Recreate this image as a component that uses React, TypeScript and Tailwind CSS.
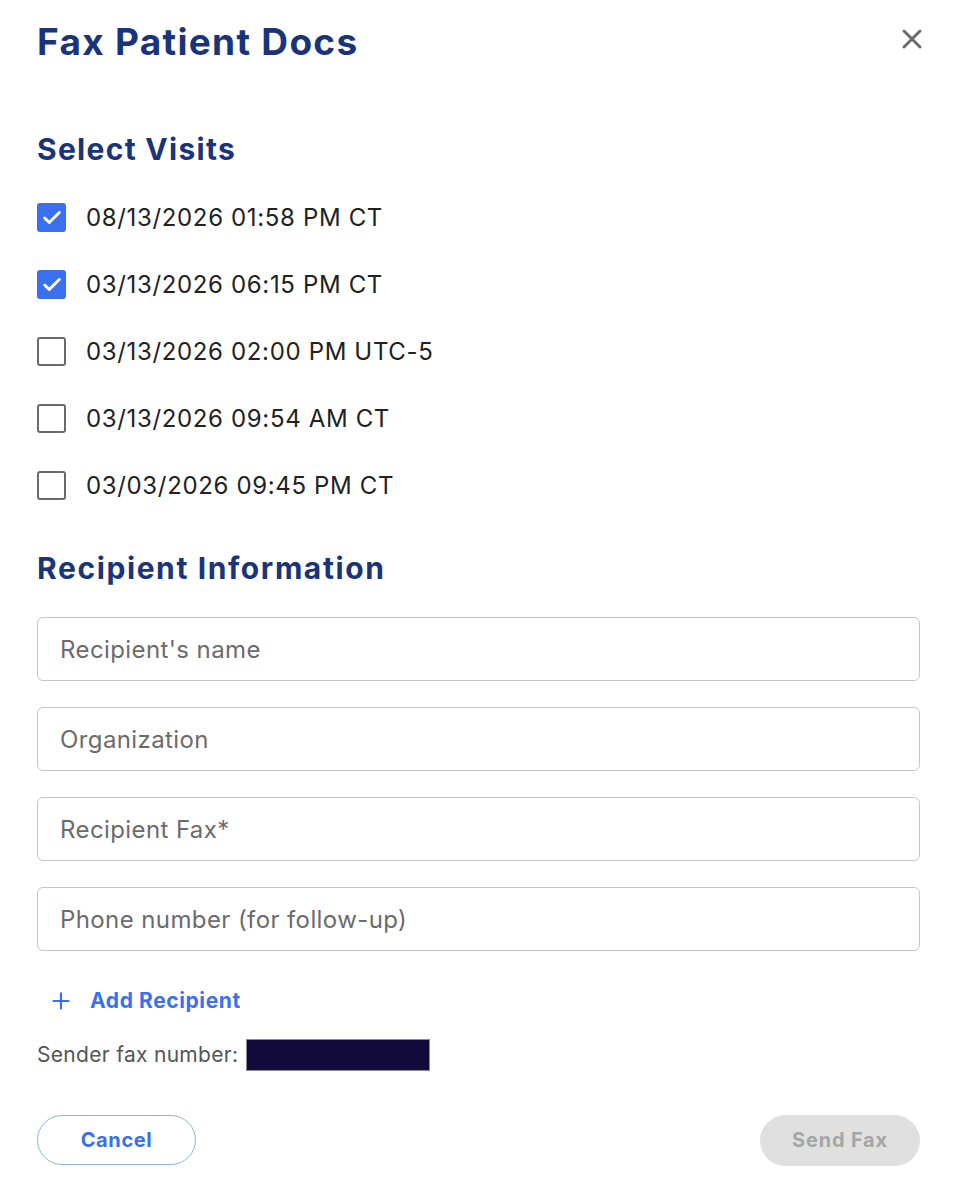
import { Check, Plus, X } from 'lucide-react';

const visits = [
  { label: '08/13/2026 01:58 PM CT', checked: true },
  { label: '03/13/2026 06:15 PM CT', checked: true },
  { label: '03/13/2026 02:00 PM UTC-5', checked: false },
  { label: '03/13/2026 09:54 AM CT', checked: false },
  { label: '03/03/2026 09:45 PM CT', checked: false },
];

const fields = [
  "Recipient's name",
  'Organization',
  'Recipient Fax*',
  'Phone number (for follow-up)',
];

function VisitRow({ label, checked }: { label: string; checked: boolean }) {
  return (
    <label className="flex h-[67px] items-center gap-[20px]">
      {checked ? (
        <span className="flex h-[29px] w-[29px] items-center justify-center rounded-[3px] bg-[#3a6ff0]">
          <Check className="h-[22px] w-[22px] text-white" strokeWidth={3.2} />
        </span>
      ) : (
        <span className="h-[29px] w-[29px] rounded-[3px] border-[2.5px] border-[#6a6a6a] bg-white" />
      )}
      <span className="text-[24px] tracking-[0.65px] text-[#222]">{label}</span>
    </label>
  );
}

export default function App() {
  return (
    <div className="min-h-screen bg-white font-['Inter',sans-serif]">
      <div className="px-[37px] pt-[19px] pb-[12px] pr-[36px]">
        {/* header */}
        <div className="flex items-start justify-between">
          <h1 className="text-[37px] leading-[46px] font-bold tracking-[1.3px] text-[#1a347a]">
            Fax Patient Docs
          </h1>
          <button className="mt-[4px] -mr-[8px] text-[#6b6b6b]">
            <X className="h-[32px] w-[32px]" strokeWidth={2.2} />
          </button>
        </div>

        {/* visits */}
        <h2 className="mt-[66px] text-[30px] leading-[36px] font-bold tracking-[1.3px] text-[#1a347a]">
          Select Visits
        </h2>
        <div className="mt-[17px]">
          {visits.map((v) => (
            <VisitRow key={v.label} label={v.label} checked={v.checked} />
          ))}
        </div>

        {/* recipient */}
        <h2 className="mt-[31px] text-[30px] leading-[36px] font-bold tracking-[1.6px] text-[#1a347a]">
          Recipient Information
        </h2>
        <div className="mt-[31px] flex flex-col gap-[26px]">
          {fields.map((f) => (
            <input
              key={f}
              placeholder={f}
              className="h-[64px] w-full rounded-[6px] border border-[#c6c6c6] px-[22px] text-[24px] tracking-[0.4px] text-[#222] outline-none placeholder:text-[#6b6b6b]"
            />
          ))}
        </div>

        <button className="mt-[34px] flex items-center gap-[16px] pl-[11px] text-[21px] font-bold tracking-[0.6px] text-[#3a6ff0]">
          <Plus className="h-[26px] w-[26px]" strokeWidth={2} />
          Add Recipient
        </button>

        <div className="mt-[22px] flex items-center gap-[8px] text-[21px] tracking-[0.3px] text-[#555]">
          <span>Sender fax number:</span>
          <span className="h-[32px] w-[184px] border border-[#8a8a9a] bg-[#110a3a]" />
        </div>

        {/* actions */}
        <div className="mt-[44px] flex items-center justify-between">
          <button className="h-[50px] w-[159px] rounded-full border border-[#8fb0f5] text-[20px] font-bold tracking-[0.6px] text-[#3a6ff0]">
            Cancel
          </button>
          <button
            disabled
            className="h-[51px] w-[160px] rounded-full bg-[#e0e0e0] text-[20px] font-bold tracking-[0.8px] text-[#a6a6a6]"
          >
            Send Fax
          </button>
        </div>
      </div>
    </div>
  );
}
